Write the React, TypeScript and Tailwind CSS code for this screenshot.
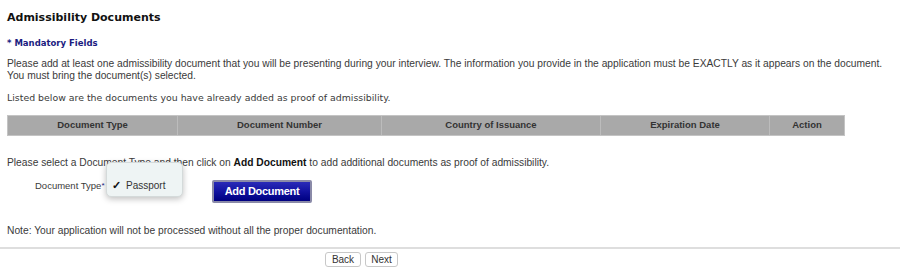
import React from "react";

const arial = "font-['Liberation_Sans',Arial,sans-serif]";
const verdana = "font-['DejaVu_Sans',Verdana,sans-serif]";

const columns = [
  { label: "Document Type", w: "w-[169px]" },
  { label: "Document Number", w: "w-[204px]" },
  { label: "Country of Issuance", w: "w-[219px]" },
  { label: "Expiration Date", w: "w-[169px]" },
  { label: "Action", w: "flex-1" },
];

export default function App() {
  return (
    <div className={`w-[900px] h-[271px] bg-white overflow-hidden text-[#3a3a3a] ${arial}`}>
      <div className="px-[7px]">
        {/* Header */}
        <h1 className={`pt-[11px] text-[11px] leading-[14px] font-bold text-[#111] ${verdana}`}>
          Admissibility Documents
        </h1>
        <p className={`mt-[13px] text-[8.5px] leading-[10px] font-bold text-[#1b1b80] ${verdana}`}>
          * Mandatory Fields
        </p>

        <p className="mt-[10px] text-[10.25px] leading-[12px]">
          Please add at least one admissibility document that you will be presenting during your interview. The
          information you provide in the application must be EXACTLY as it appears on the document.
          <br />
          You must bring the document(s) selected.
        </p>

        <p className={`mt-[10px] text-[9.4px] leading-[12px] ${verdana}`}>
          Listed below are the documents you have already added as proof of admissibility.
        </p>

        {/* Documents table */}
        <div className="mt-[11px] w-[838px] h-[21px] flex bg-[#a9a9a9] border border-[#c4c4c4]">
          {columns.map((c, i) => (
            <div
              key={c.label}
              className={`${c.w} flex items-center justify-center text-[9.5px] font-bold text-[#333] ${
                i > 0 ? "border-l border-[#bcbcbc]" : ""
              }`}
            >
              {c.label}
            </div>
          ))}
        </div>

        <p className="mt-[21px] text-[10.25px] leading-[12px]">
          Please select a Document Type and then click on <b className="text-[#111]">Add Document</b> to add
          additional documents as proof of admissibility.
        </p>

        {/* Add document row */}
        <div className="mt-[11px] flex items-start h-[23px]">
          <div className="ml-[28px] text-[9.5px] leading-[12px] w-[71px] whitespace-nowrap">
            Document Type<span className="text-[#1b1b80] text-[8px] align-top">*</span>
          </div>
          <div className="relative w-[106px]">
            <div className="absolute left-0 top-[-18px] w-[77px] h-[35px] rounded-[5px] bg-[#eef4f4] border border-[#d4dada] shadow-[0_2px_6px_rgba(0,0,0,0.25)] flex items-center pt-[11px] pl-[5px] gap-[5px] text-[10px] text-[#333]">
              <span className="text-[11px] font-bold text-[#111]">✓</span>
              <span>Passport</span>
            </div>
          </div>
          <button className="w-[100px] h-[23px] rounded-[2px] border-2 border-[#8a8aa8] bg-gradient-to-b from-[#2a2ab8] via-[#1212a0] to-[#000080] text-white text-[11px] font-bold tracking-[-0.3px] flex items-center justify-center">
            Add Document
          </button>
        </div>

        <p className="mt-[22px] text-[10.25px] leading-[12px]">
          Note: Your application will not be processed without all the proper documentation.
        </p>
      </div>

      <div className="mt-[10px] h-[2px] bg-[#dedede]" />

      {/* Navigation */}
      <div className="mt-[3px] pl-[325px] flex gap-[4px]">
        <button className="w-[36px] h-[15px] rounded-[3px] border border-[#c8c8c8] bg-white text-[10px] leading-[13px] text-[#333]">
          Back
        </button>
        <button className="w-[33px] h-[15px] rounded-[3px] border border-[#c8c8c8] bg-white text-[10px] leading-[13px] text-[#333]">
          Next
        </button>
      </div>
    </div>
  );
}
